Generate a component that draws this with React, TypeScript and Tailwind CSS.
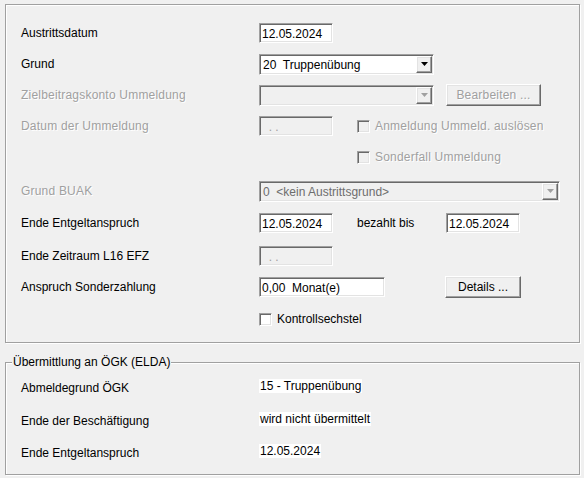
import type { ReactNode } from 'react';

const sunken =
  'border border-t-[#a0a0a0] border-l-[#a0a0a0] border-b-white border-r-white shadow-[inset_1px_1px_0_#696969,inset_-1px_-1px_0_#e3e3e3]';
const raised =
  'border border-t-white border-l-white border-b-[#696969] border-r-[#696969] shadow-[inset_-1px_-1px_0_#a0a0a0,inset_1px_1px_0_#e3e3e3]';
const embossed = 'text-[#a0a0a0] tracking-[0.2px] [text-shadow:1px_1px_0_#ffffff]';

function Label({ children, disabled }: { children: ReactNode; disabled?: boolean }) {
  return (
    <div className={`w-[238px] shrink-0 ${disabled ? embossed : 'text-black'}`}>{children}</div>
  );
}

function TextBox({ value, width, disabled }: { value: string; width: string; disabled?: boolean }) {
  return (
    <div
      className={`${width} h-[20px] ${sunken} ${disabled ? 'bg-[#f0f0f0] text-[#a0a0a0]' : 'bg-white text-black'} flex items-center pl-[2px] pt-[1px] whitespace-pre`}
    >
      {value}
    </div>
  );
}

function Arrow({ disabled }: { disabled?: boolean }) {
  return (
    <div className={`w-[16px] h-full ${raised} bg-[#f0f0f0] flex items-center justify-center`}>
      <svg width="7" height="4" viewBox="0 0 7 4">
        <polygon points="0,0 7,0 3.5,4" fill={disabled ? '#a0a0a0' : '#000000'} />
      </svg>
    </div>
  );
}

function Combo({ value, width, disabled }: { value: string; width: string; disabled?: boolean }) {
  return (
    <div
      className={`${width} h-[21px] ${sunken} ${disabled ? 'bg-[#f0f0f0] text-[#6d6d6d]' : 'bg-white text-black'} flex items-stretch p-[1px]`}
    >
      <div className="flex-1 flex items-center pl-[2px] pt-[1px] whitespace-pre">{value}</div>
      <Arrow disabled={disabled} />
    </div>
  );
}

function Button({ children, width, disabled }: { children: ReactNode; width: string; disabled?: boolean }) {
  return (
    <div
      className={`${width} h-[22px] ${raised} bg-[#f0f0f0] flex items-center justify-center ${disabled ? embossed : 'text-black'}`}
    >
      {children}
    </div>
  );
}

function Check({ label, disabled }: { label: string; disabled?: boolean }) {
  return (
    <div className="flex items-center gap-[5px]">
      <div className={`w-[13px] h-[13px] ${sunken} ${disabled ? 'bg-[#f0f0f0]' : 'bg-white'}`} />
      <span className={disabled ? embossed : 'text-black'}>{label}</span>
    </div>
  );
}

function Row({ children, className = '' }: { children: ReactNode; className?: string }) {
  return <div className={`h-[22px] flex items-center ${className}`}>{children}</div>;
}

function InfoRow({ label, value, className = '' }: { label: string; value: string; className?: string }) {
  return (
    <div className={`h-[16px] flex items-start ${className}`}>
      <div className="w-[238px] shrink-0 pt-[2px] text-black">{label}</div>
      <span className="bg-white px-px leading-[14px] text-black">{value}</span>
    </div>
  );
}

export default function App() {
  return (
    <div className="w-[584px] h-[478px] bg-[#f0f0f0] pt-[4px] pl-[5px] font-['Liberation_Sans',Arial,sans-serif] text-[12px] leading-[14px] select-none overflow-hidden">
      {/* Austritt */}
      <div className="w-[575px] h-[339px] border border-[#a0a0a0] shadow-[inset_1px_1px_0_#ffffff,1px_1px_0_#ffffff] pt-[17px] pl-[15px] flex flex-col">
        <Row>
          <Label>Austrittsdatum</Label>
          <TextBox value="12.05.2024" width="w-[74px]" />
        </Row>
        <Row className="mt-[9px]">
          <Label>Grund</Label>
          <Combo value="20  Truppenübung" width="w-[175px]" />
        </Row>
        <Row className="mt-[9px]">
          <Label disabled>Zielbeitragskonto Ummeldung</Label>
          <Combo value="" width="w-[175px]" disabled />
          <div className="ml-[12px]">
            <Button width="w-[95px]" disabled>
              Bearbeiten ...
            </Button>
          </div>
        </Row>
        <Row className="mt-[9px]">
          <Label disabled>Datum der Ummeldung</Label>
          <TextBox value="  . ." width="w-[74px]" disabled />
          <div className="ml-[24px]">
            <Check label="Anmeldung Ummeld. auslösen" disabled />
          </div>
        </Row>
        <Row className="mt-[9px]">
          <div className="ml-[336px]">
            <Check label="Sonderfall Ummeldung" disabled />
          </div>
        </Row>
        <Row className="mt-[12px]">
          <Label disabled>Grund BUAK</Label>
          <Combo value="0  <kein Austrittsgrund>" width="w-[301px]" disabled />
        </Row>
        <Row className="mt-[10px]">
          <Label>Ende Entgeltanspruch</Label>
          <TextBox value="12.05.2024" width="w-[74px]" />
          <span className="ml-[24px] w-[89px] text-black">bezahlt bis</span>
          <TextBox value="12.05.2024" width="w-[74px]" />
        </Row>
        <Row className="mt-[11px]">
          <Label>Ende Zeitraum L16 EFZ</Label>
          <TextBox value="  . ." width="w-[74px]" disabled />
        </Row>
        <Row className="mt-[9px]">
          <Label>Anspruch Sonderzahlung</Label>
          <TextBox value="0,00  Monat(e)" width="w-[126px]" />
          <div className="ml-[60px]">
            <Button width="w-[76px]">Details ...</Button>
          </div>
        </Row>
        <Row className="mt-[10px]">
          <div className="ml-[238px]">
            <Check label="Kontrollsechstel" />
          </div>
        </Row>
      </div>

      {/* ELDA */}
      <div className="relative mt-[19px] w-[575px] h-[113px] border border-[#a0a0a0] shadow-[inset_1px_1px_0_#ffffff,1px_1px_0_#ffffff] pt-[16px] pl-[15px] flex flex-col">
        <span className="absolute -top-[8px] left-[6px] bg-[#f0f0f0] px-[1px] text-black">
          Übermittlung an ÖGK (ELDA)
        </span>
        <InfoRow label="Abmeldegrund ÖGK" value="15 - Truppenübung" />
        <InfoRow label="Ende der Beschäftigung" value="wird nicht übermittelt" className="mt-[17px]" />
        <InfoRow label="Ende Entgeltanspruch" value="12.05.2024" className="mt-[16px]" />
      </div>
    </div>
  );
}
